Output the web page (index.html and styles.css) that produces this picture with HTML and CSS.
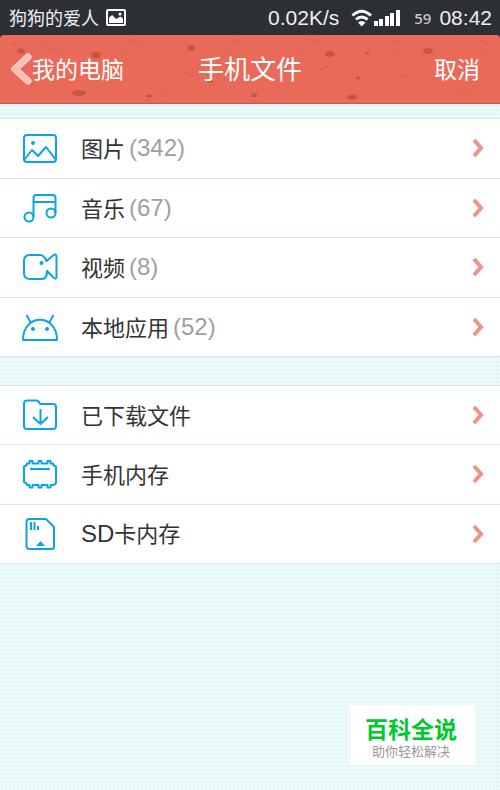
FILE: index.html
```html
<!DOCTYPE html>
<html lang="zh-CN">
<head>
  <meta charset="UTF-8">
  <meta name="viewport" content="width=device-width, initial-scale=1">
  <title>手机文件</title>
  <link rel="stylesheet" href="styles.css">
</head>
<body>
  <div class="status-bar">
    <span class="carrier">狗狗的爱人</span>
    <svg class="shot" width="20" height="17" viewBox="0 0 20 17">
      <rect x="1" y="1" width="18" height="15" rx="1" fill="none" stroke="#fff" stroke-width="2"/>
      <path d="M3 14V9Q6 4 8 8Q10 11 12 9Q15 6 17 10V14Z" fill="#fff"/>
      <circle cx="14" cy="5" r="1.500" fill="#fff"/>
    </svg>
    <span class="speed">0.02K/s</span>
    <svg class="signal" width="50" height="18" viewBox="0 0 50 18">
      <path d="M1.500 6.500Q10.500 -2 20 6.500M5 10.500Q10.500 5.500 16.500 10.500" fill="none" stroke="#fff" stroke-width="3"/>
      <path d="M7 13.500Q10.500 10.500 14.500 13.500L10.700 17.500Z" fill="#fff"/>
      <path d="M23 12h4v5h-4zM28 10h4v7h-4zM34 7h4v10h-4zM39 4h4v13h-4zM45 1h4v16h-4z" fill="#fff"/>
    </svg>
    <span class="battery">59</span>
    <span class="clock">08:42</span>
  </div>

  <header>
    <svg class="texture" viewBox="0 0 500 70" preserveAspectRatio="xMidYMid slice">
      <g fill="#c95443">
        <ellipse cx="21" cy="17" rx="4" ry="2.500"/>
        <ellipse cx="96" cy="21" rx="5" ry="3.500"/>
        <ellipse cx="191" cy="14" rx="4" ry="3"/>
        <ellipse cx="79" cy="59" rx="7" ry="3"/>
        <ellipse cx="149" cy="62" rx="3" ry="1.500"/>
        <ellipse cx="210" cy="47" rx="3" ry="1.500"/>
        <ellipse cx="254" cy="61" rx="3" ry="2"/>
        <ellipse cx="330" cy="20" rx="5" ry="3"/>
        <ellipse cx="367" cy="19" rx="2" ry="1.500"/>
        <ellipse cx="358" cy="44" rx="2" ry="1.500"/>
        <ellipse cx="352" cy="63" rx="5" ry="2.500"/>
        <ellipse cx="428" cy="17" rx="5" ry="3"/>
      </g>
      <path d="M44 6l6 4M52 16l7-2M132 6l8 3M123 16h4M112 38l8-7M184 38l10 5M232 6l7 3M222 17l5-2M226 39l7 3M163 58l5 4M310 5l8 3M300 16l5 1M320 36l8-4M392 7l7 3M390 17l6-2M402 40l8 3M480 7l8 3M485 18l5-2M462 55l5 4M30 50l5 2M11 8l5 3" fill="none" stroke="#e16050" stroke-width="1.500"/>
    </svg>
    <button class="back">
      <svg width="21" height="32" viewBox="0 0 21 32">
        <path d="M17 4L4 16L17 28" fill="none" stroke="#ffe0da" stroke-width="7" stroke-linejoin="miter" stroke-linecap="round"/>
        <path d="M17 4L4 16L17 28" fill="none" stroke="#ffbdb2" stroke-width="5" stroke-linejoin="miter" stroke-linecap="round"/>
      </svg>
      <span>我的电脑</span>
    </button>
    <h1>手机文件</h1>
    <button class="cancel">取消</button>
  </header>

  <main>
    <ul class="list media">
      <li><a href="#">
        <svg class="icon" viewBox="0 0 36 36">
          <rect x="2" y="5" width="32" height="27" rx="3"/>
          <path d="M2 30L10 20L16 26L24 17L34 30"/>
          <circle class="fill" cx="11" cy="13" r="2"/>
        </svg>
        <span class="name">图片</span><span class="count">(342)</span>
        <svg class="arrow" viewBox="0 0 12 20"><path d="M2 2L9 10L2 18"/></svg>
      </a></li>
      <li><a href="#">
        <svg class="icon" viewBox="0 0 36 36">
          <circle cx="7" cy="27" r="4.500"/>
          <circle cx="29" cy="23" r="4.500"/>
          <path d="M11.500 27V8Q11.500 5 14.500 5H30.500Q33.500 5 33.500 8V23M11.500 12H33.500"/>
        </svg>
        <span class="name">音乐</span><span class="count">(67)</span>
        <svg class="arrow" viewBox="0 0 12 20"><path d="M2 2L9 10L2 18"/></svg>
      </a></li>
      <li><a href="#">
        <svg class="icon" viewBox="0 0 36 36">
          <path d="M8 6H18Q22 6 24.500 12L31 6.500Q34.500 4 34.500 8V28Q34.500 31 31.500 28.500L25 22Q25 30 20 30H8Q2 30 2 24V12Q2 6 8 6Z"/>
          <circle class="fill" cx="19.500" cy="14" r="2"/>
        </svg>
        <span class="name">视频</span><span class="count">(8)</span>
        <svg class="arrow" viewBox="0 0 12 20"><path d="M2 2L9 10L2 18"/></svg>
      </a></li>
      <li><a href="#">
        <svg class="icon" viewBox="0 0 36 36">
          <path d="M1 31C1 4 35 4 35 31ZM4.500 6L9 14M31.500 6L27 14"/>
          <circle class="fill" cx="11" cy="20" r="2"/>
          <circle class="fill" cx="25" cy="20" r="2"/>
        </svg>
        <span class="name">本地应用</span><span class="count">(52)</span>
        <svg class="arrow" viewBox="0 0 12 20"><path d="M2 2L9 10L2 18"/></svg>
      </a></li>
    </ul>

    <ul class="list storage">
      <li><a href="#">
        <svg class="icon" viewBox="0 0 36 36">
          <path d="M5 3.500H14Q17 3.500 18 7H31Q34 7 34 10V29Q34 32 31 32H5Q2 32 2 29V6.500Q2 3.500 5 3.500ZM18.500 12V27M11 20L18.500 27L26 20"/>
        </svg>
        <span class="name">已下载文件</span>
        <svg class="arrow" viewBox="0 0 12 20"><path d="M2 2L9 10L2 18"/></svg>
      </a></li>
      <li><a href="#">
        <svg class="icon" viewBox="0 0 36 36">
          <path d="M5 7.500H7.500V5H10.500V7.500H16.500V5H19.500V7.500H25.500V5H28.500V7.500H31Q31 10 34 10.500V26Q34 28.500 31 29H28.500V31.500H25.500V29H19.500V31.500H16.500V29H10.500V31.500H7.500V29H5Q5 27 2 26V10.500Q5 10 5 7.500ZM8 13H28"/>
        </svg>
        <span class="name">手机内存</span>
        <svg class="arrow" viewBox="0 0 12 20"><path d="M2 2L9 10L2 18"/></svg>
      </a></li>
      <li><a href="#">
        <svg class="icon" viewBox="0 0 36 36">
          <path d="M7.500 3H24L32 11V31Q32 33 30 33H7.500Q4.500 33 4.500 30V6Q4.500 3 7.500 3ZM9 6V14M12.500 6V14M16 10V14"/>
          <path class="fill" d="M18.500 25L23 30H14Z"/>
        </svg>
        <span class="name"><span class="latin">SD</span>卡内存</span>
        <svg class="arrow" viewBox="0 0 12 20"><path d="M2 2L9 10L2 18"/></svg>
      </a></li>
    </ul>
  </main>

  <div class="brand">
    <strong>百科全说</strong>
    <small>助你轻松解决</small>
  </div>
</body>
</html>
```
FILE: styles.css
```css
* { box-sizing: border-box; }
body {
  margin: 0;
  min-height: 100vh;
  font-family: "Noto Sans CJK SC", sans-serif;
  color: #333;
  background-color: #ebfafa;
  background-image: radial-gradient(#e1f4f3 1px, transparent 1px);
  background-size: 4px 4px;
}
button { border: 0; padding: 0; background: none; color: #fff; font: inherit; cursor: pointer; }

.status-bar {
  display: flex;
  align-items: center;
  height: 35px;
  padding: 0 8px 0 9px;
  background: #2c2f34;
  color: #f0f0f0;
  font-size: 21px;
  line-height: 24px;
}
.speed, .clock, .count, .latin { font-family: "Liberation Sans", sans-serif; }
.carrier { padding-bottom: 2px; font-size: 18px; }
.shot { margin-left: 7px; }
.speed { margin-left: auto; }
.signal { margin: 0 13px 0 12px; }
.battery { margin-right: 8px; font: 500 15px "Noto Sans", sans-serif; color: #c8c9ca; }

header {
  position: relative;
  display: grid;
  grid-template-columns: 1fr auto 1fr;
  align-items: center;
  height: 69px;
  padding: 0 11px;
  border-bottom: 1px solid #c9594a;
  border-radius: 4px 4px 0 0;
  overflow: hidden;
  background: #e96a59;
  box-shadow: 0 -4px 0 #2c2f34;
  color: #fff;
  font-size: 23px;
  line-height: 32px;
}
header > * { position: relative; }
header .texture { position: absolute; width: 100%; height: 100%; }
.back { display: flex; align-items: center; }
.back span, h1, .cancel { padding-bottom: 2px; }
h1 { margin: 0; font-size: 26px; font-weight: normal; }
.cancel { justify-self: end; padding-right: 9px; }

.list {
  display: grid;
  grid-auto-rows: 1fr;
  margin: 14px 0 28px;
  padding: 0;
  list-style: none;
  background: #fff;
  border-top: 1px solid #d3e8e7;
}
.media { min-height: 239px; }
.storage { min-height: 179px; }
.list li { border-bottom: 1px solid #d3e8e7; }
.list a {
  display: flex;
  align-items: center;
  height: 100%;
  padding: 0 16px 0 22px;
  color: #333;
  font-size: 22px;
  line-height: 30px;
  text-decoration: none;
}
.icon {
  width: 36px;
  height: 36px;
  margin-right: 23px;
  fill: none;
  stroke: #0ba5e1;
  stroke-width: 2;
  stroke-linejoin: round;
}
.icon .fill { fill: #0ba5e1; stroke: none; }
.name { padding-bottom: 2px; }
.count, .latin { font-size: 24px; }
.count { margin-left: 4px; color: #9f9f9f; }
.arrow { width: 12px; height: 20px; margin-left: auto; fill: none; stroke: #ee9388; stroke-width: 4; }

.brand {
  position: fixed;
  right: 25px;
  bottom: 25px;
  width: 125px;
  padding: 11px 3px 5px 0;
  background: #fff;
  font-family: "Liberation Sans", "Noto Sans CJK SC", sans-serif;
  text-align: center;
}
.brand strong, .brand small { display: block; }
.brand strong { color: #00c92c; font-size: 23px; font-weight: bold; line-height: 28px; }
.brand small { color: #999; font-size: 13px; line-height: 16px; }
```
